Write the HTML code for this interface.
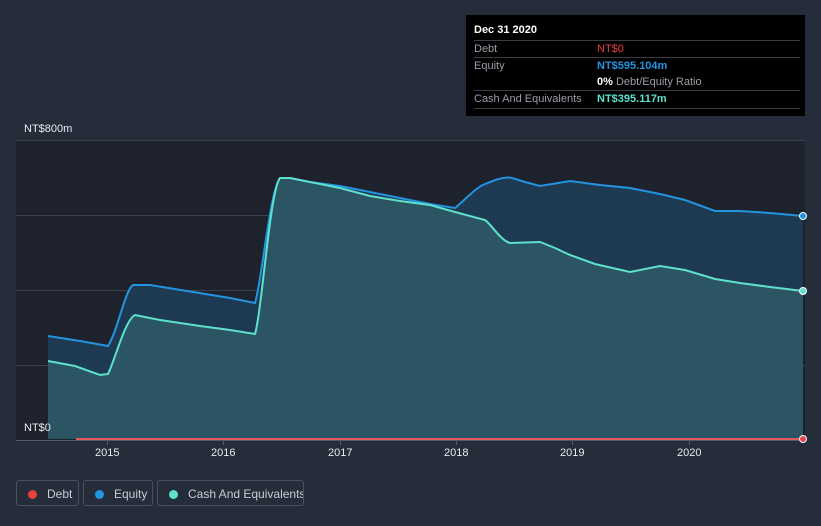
<!DOCTYPE html><html><head><style>
body{margin:0;width:821px;height:526px;background:#262d3a;font-family:"Liberation Sans",sans-serif;overflow:hidden;position:relative}
.tt{position:absolute;left:466px;top:15px;width:339px;height:101px;background:#000;color:#fff;font-size:11px}
.tt .r{position:absolute;left:8px;right:5px;border-top:1px solid #3a3d44;height:17px;line-height:17px;color:#9a9ea6}
.lg{position:absolute;top:480px;height:26px;border:1px solid #4a515d;border-radius:3px;color:#c8ccd2;font-size:12px;line-height:26px;box-sizing:border-box;white-space:nowrap;overflow:hidden}
.lg i{display:inline-block;width:9px;height:9px;border-radius:50%;margin:0 10px 0 11px;vertical-align:-1px}
.ax{position:absolute;color:#e8eaed;font-size:11px}
</style></head><body>
<svg width="821" height="526" style="position:absolute;left:0;top:0">
<rect x="16" y="140" width="789" height="300" fill="#1d222c"/>
<g stroke="#3a414d" stroke-width="1"><line x1="16" y1="140.5" x2="805" y2="140.5"/><line x1="16" y1="215.5" x2="805" y2="215.5"/><line x1="16" y1="290.5" x2="805" y2="290.5"/><line x1="16" y1="365.5" x2="805" y2="365.5"/></g>
<path d="M48,336 L80,341 L108,346 C118,330 125,290 133,285 L150,285 L230,298 L255,303 C262,280 270,190 280,178 L290,178 L310,182 L340,186 L370,192 L400,198 L430,204 L455,208 C465,200 475,188 485,184 C495,180 505,176 512,178 L525,182 L540,186 L570,181 L600,185 L630,188 L660,194 L685,200 L715,211 L740,211 L770,213 L803,216 L803,439 L48,439 Z" fill="#1f3c55" opacity="0.95"/>
<path d="M48,361 L75,366 L100,375 L108,374 C115,360 125,320 135,315 L160,320 L200,326 L230,330 L255,334 C262,310 270,190 280,178 L290,178 L340,188 L370,196 L400,201 L430,205 L455,212 L485,220 C492,225 500,240 510,243 L540,242 L555,248 L570,255 L595,264 L630,272 L660,266 L685,270 L715,279 L740,283 L770,287 L803,291 L803,439 L48,439 Z" fill="#2e5a66" opacity="0.85"/>
<path d="M48,336 L80,341 L108,346 C118,330 125,290 133,285 L150,285 L230,298 L255,303 C262,280 270,190 280,178 L290,178 L310,182 L340,186 L370,192 L400,198 L430,204 L455,208 C465,200 475,188 485,184 C495,180 505,176 512,178 L525,182 L540,186 L570,181 L600,185 L630,188 L660,194 L685,200 L715,211 L740,211 L770,213 L803,216" fill="none" stroke="#2394df" stroke-width="2"/>
<path d="M48,361 L75,366 L100,375 L108,374 C115,360 125,320 135,315 L160,320 L200,326 L230,330 L255,334 C262,310 270,190 280,178 L290,178 L340,188 L370,196 L400,201 L430,205 L455,212 L485,220 C492,225 500,240 510,243 L540,242 L555,248 L570,255 L595,264 L630,272 L660,266 L685,270 L715,279 L740,283 L770,287 L803,291" fill="none" stroke="#5ee0cc" stroke-width="2"/>
<line x1="76" y1="439" x2="803" y2="439" stroke="#e05a5f" stroke-width="2"/>
<line x1="16" y1="440.5" x2="805" y2="440.5" stroke="#555c68"/>
<g stroke="#555c68"><line x1="107.5" y1="441" x2="107.5" y2="445"/><line x1="223.5" y1="441" x2="223.5" y2="445"/><line x1="340.5" y1="441" x2="340.5" y2="445"/><line x1="456.5" y1="441" x2="456.5" y2="445"/><line x1="572.5" y1="441" x2="572.5" y2="445"/><line x1="689.5" y1="441" x2="689.5" y2="445"/></g>
<circle cx="803" cy="216" r="3.5" fill="#2394df" stroke="#fff" stroke-width="1"/>
<circle cx="803" cy="291" r="3.5" fill="#5ee0cc" stroke="#fff" stroke-width="1"/>
<circle cx="803" cy="439" r="3.5" fill="#e0484d" stroke="#fff" stroke-width="1"/>
</svg>
<div class="ax" style="left:24px;top:123px">NT$800m</div>
<div class="ax" style="left:24px;top:422px">NT$0</div>
<div class="ax" style="left:95px;top:447px">2015</div>
<div class="ax" style="left:211px;top:447px">2016</div>
<div class="ax" style="left:328px;top:447px">2017</div>
<div class="ax" style="left:444px;top:447px">2018</div>
<div class="ax" style="left:560px;top:447px">2019</div>
<div class="ax" style="left:677px;top:447px">2020</div>
<div class="tt">
<div style="position:absolute;left:8px;top:9px;font-weight:bold">Dec 31 2020</div>
<div class="r" style="top:25px">Debt<span style="position:absolute;left:123px;color:#e8403f">NT$0</span></div>
<div class="r" style="top:42px">Equity<span style="position:absolute;left:123px;color:#2394df;font-weight:bold">NT$595.104m</span></div>
<div class="r" style="top:59px;border-top:none"><span style="position:absolute;left:123px"><b style="color:#fff">0%</b> Debt/Equity Ratio</span></div>
<div class="r" style="top:75px;border-bottom:1px solid #3a3d44">Cash And Equivalents<span style="position:absolute;left:123px;color:#5ee0cc;font-weight:bold">NT$395.117m</span></div>
</div>
<div class="lg" style="left:16px;width:63px"><i style="background:#e8403f"></i>Debt</div>
<div class="lg" style="left:83px;width:70px"><i style="background:#2394df"></i>Equity</div>
<div class="lg" style="left:157px;width:147px"><i style="background:#5ee0cc"></i>Cash And Equivalents</div>
</body></html>
